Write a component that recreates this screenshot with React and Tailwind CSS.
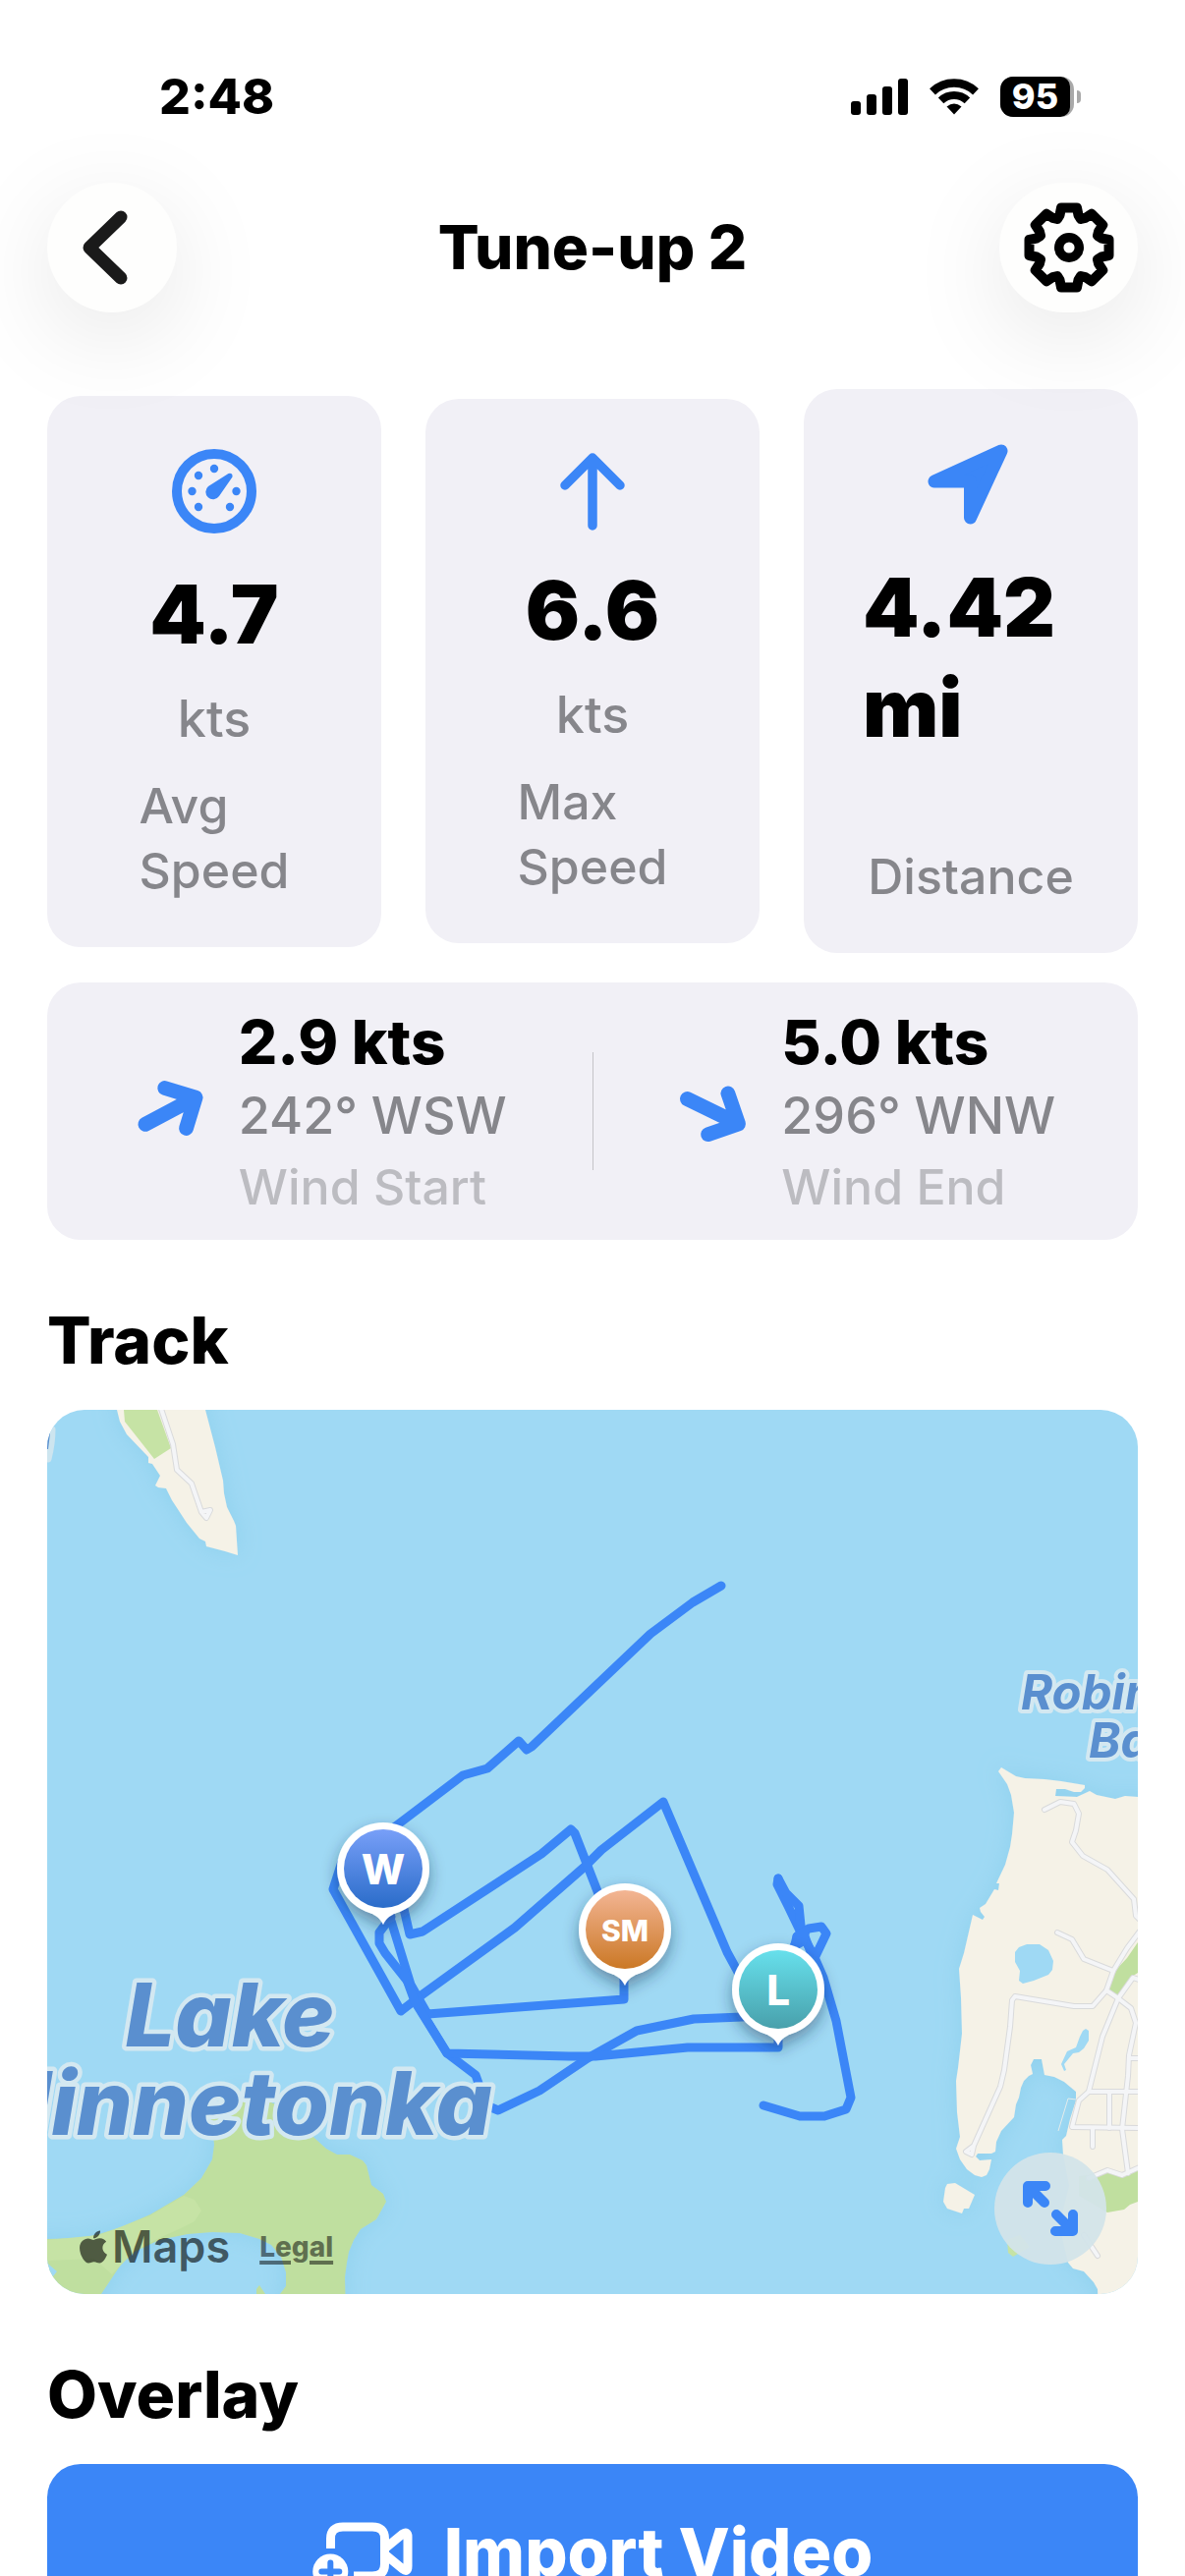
import React from 'react';
import { FaApple } from 'react-icons/fa';

const BLUE = '#3b86f7';

// teeth of the settings gear, one entry per 45 degrees
const gearPoints = Array.from({ length: 8 })
  .flatMap((_, i) => {
    const a = (i * Math.PI) / 4;
    return [[-12, -29], [-9.5, -33], [-8, -40.5], [8, -40.5], [9.5, -33]].map(
      ([x, y]) => [x * Math.cos(a) - y * Math.sin(a), x * Math.sin(a) + y * Math.cos(a)]
    );
  })
  .map(([x, y]) => `${x.toFixed(1)},${y.toFixed(1)}`)
  .join(' ');

const GearIcon = () => (
  <svg width="92" height="92" viewBox="-46 -46 92 92" fill="none" stroke="#000" strokeWidth="10" strokeLinejoin="round">
    <polygon points={gearPoints} />
    <circle r="10.3" strokeWidth="9.4" />
  </svg>
);

const GaugeIcon = () => (
  <svg width="86" height="86" viewBox="-43 -43 86 86" fill={BLUE}>
    <circle r="38" fill="none" stroke={BLUE} strokeWidth="10" />
    {[[0, -23], [-16, -16], [-22.5, 0], [-16, 16], [16, 16], [22.5, 0]].map(([x, y]) => (
      <circle key={`${x},${y}`} cx={x} cy={y} r="4.2" />
    ))}
    <path d="M14.5 -18 Q19 -19 18.5 -14.5 L5 5 A7.5 7.5 0 1 1 -6 -5 Z" />
  </svg>
);

const ArrowUpIcon = () => (
  <svg width="66" height="80" viewBox="-33 -40 66 80" fill="none" stroke={BLUE} strokeWidth="9.5" strokeLinecap="round" strokeLinejoin="round">
    <path d="M0 35V-33M-28 -6L0 -34L28 -6" />
  </svg>
);

const NavigationIcon = () => (
  <svg className="overflow-visible" width="82" height="82" viewBox="3 1 82 82" fill={BLUE} stroke={BLUE} strokeWidth="13" strokeLinejoin="round">
    <path d="M75 7L7 38L43.5 38L43.5 75Z" />
  </svg>
);

const WindArrow = ({ angle }) => (
  <svg width="76" height="76" viewBox="-36 -36 72 72" fill="none" stroke={BLUE} strokeWidth="14" strokeLinecap="round" strokeLinejoin="round">
    <path d="M0 27V-27M-22 -6L0 -28L22 -6" transform={`rotate(${angle})`} />
  </svg>
);

const stats = [
  { label: 'Avg Speed', value: '4.7', unit: 'kts', icon: <GaugeIcon />, iconBox: 'h-[105px]' },
  { label: 'Max Speed', value: '6.6', unit: 'kts', icon: <ArrowUpIcon />, iconBox: 'h-[98px]' },
  { label: 'Distance', value: '4.42 mi', unit: '', icon: <NavigationIcon />, iconBox: 'h-[105px]' },
];

const winds = [
  { label: 'Wind Start', speed: '2.9 kts', from: '242° WSW', angle: 62 },
  { label: 'Wind End', speed: '5.0 kts', from: '296° WNW', angle: 116 },
];

const roads = [
  '115,-4 128,35 132,61 147,75 157,104 166,102 162,110 157,104',
  '1015,407 1031,399 1045,401 1050,411 1047,428 1043,440 1054,454 1079,468 1106,498 1108,515 1114,521',
  '1028,532 1043,539 1055,559 1085,571',
  '1114,528 1099,548 1085,571 1078,591 1064,607 1045,607 985,597 982,601 980,628 974,672 970,689 943,749 935,755 941,758 943,749',
  '1078,591 1090,599 1103,609 1108,624 1101,657 1100,678 1094,732 1100,777',
  '1114,581 1105,578 1090,599 1074,638 1060,694 1050,703 1043,730 1114,731',
  '1060,694 1114,694',
  '1081,694 1081,731',
  '1064,731 1064,750',
  '1101,660 1114,660',
  '1060,782 1079,774 1094,779 1114,770',
  '1055,840 1069,861',
];

const track = [
  '686,179 657,196 614,228 555,284 493,343 488,346 480,337 448,365 423,372 353,425 300,460 291,488 360,612 378,598 476,527 547,465 564,448 627,399 692,552 710,585',
  '744,615 707,618 658,620 600,632 550,660 501,693 459,713 447,708 436,677 407,655 382,614 367,582 344,553 338,543 338,532 350,516',
  '360,495 369,534 382,531 503,452 533,427 537,431 560,490 587,572 587,600 387,615 370,585 350,520',
  '363,572 374,602 407,655 531,658 558,658 652,649 744,649 744,630',
  '744,477 743,483 754,505 766,530 780,555 790,578 803,622 818,700 813,712 791,719 766,719 729,708',
  '744,477 752,492 765,505 767,525 780,560',
  '758,556 763,536 775,528 788,526 793,533 782,556',
  '763,536 772,530 769,541 760,546',
];

const pins = [
  { name: 'W', x: 342, y: 467, from: '#789ff8', to: '#2a6cc9', size: 42 },
  { name: 'SM', x: 588, y: 529, from: '#f3b594', to: '#cb7825', size: 30 },
  { name: 'L', x: 744, y: 590, from: '#67e0ec', to: '#48a0ab', size: 42 },
];

const Pin = ({ name, x, y, from, to, size }) => (
  <g transform={`translate(${x} ${y})`}>
    <linearGradient id={`pin-${name}`} x1="0" y1="0" x2="0" y2="1">
      <stop offset="0" stopColor={from} />
      <stop offset="1" stopColor={to} />
    </linearGradient>
    <g fill="#fff" filter="url(#pinShadow)">
      <circle r="47" />
      <path d="M-32 34C-18 46 -6 44 0 57C6 44 18 46 32 34Z" />
    </g>
    <circle r="40" fill={`url(#pin-${name})`} />
    <text y={size === 30 ? 12 : 16} textAnchor="middle" fill="#fff" fontSize={size} fontWeight="800">{name}</text>
  </g>
);

const TrackMap = () => (
  <svg className="block h-[900px] w-full bg-[#9fd9f4]" viewBox="0 0 1110 900" preserveAspectRatio="xMidYMid slice">
    <defs>
      <filter id="pinShadow" x="-50%" y="-50%" width="200%" height="200%">
        <feDropShadow dx="0" dy="7" stdDeviation="8" floodColor="#1a2a4a" floodOpacity="0.45" />
      </filter>
      <filter id="shore" x="-20%" y="-20%" width="140%" height="140%">
        <feDropShadow dx="0" dy="0" stdDeviation="12" floodColor="#7cc6e4" floodOpacity="0.45" />
      </filter>
    </defs>

    {/* Land */}
    <g fill="#f5f2e7" filter="url(#shore)">
      <polygon points="71,-20 71,0 74,12 81,25 103,48 103,54 107,55 115,67 110,77 113,79 121,80 127,92 142,115 155,131 161,134 162,139 181,144 194,148 192,118 190,113 183,99 180,85 179,72 171,38 161,0 158,-20" />
      <polygon points="971,364 968,368 977,381 981,392 984,410 982,432 980,445 975,463 966,482 969,482 968,489 964,488 955,503 949,507 950,511 954,516 952,519 942,514 933,553 928,569 930,598 931,635 927,670 925,683 926,715 929,740 925,752 929,763 936,773 944,779 951,781 956,779 959,773 961,763 949,764 945,760 947,757 961,757 965,755 966,745 971,734 984,720 986,707 989,700 991,690 994,683 999,678 1003,676 1001,667 1004,661 1012,661 1015,677 1025,679 1035,684 1047,694 1047,703 1041,722 1037,739 1033,743 1034,758 1040,790 1030,830 1039,868 1044,874 1055,877 1065,888 1069,895 1070,920 1130,920 1130,394 1110,394 1097,393 1087,396 1068,392 1061,388 1048,394 1026,393 1027,386 1036,386 1045,389 1052,389 1056,385 1056,382 1032,378 1015,376 995,375 986,373" />
      <polygon points="916,788 924,787 944,799 938,813 933,813 931,818 916,813 912,806 914,792" />
      <polygon fill="#bfdf9f" points="-20,844 0,844 35,843 53,839 75,832 105,819 139,799 157,782 168,763 170,748 169,739 165,725 168,712 177,700 193,696 211,698 235,708 253,723 273,742 284,752 295,758 308,758 321,764 325,769 330,789 342,798 345,806 335,824 319,834 312,845 307,857 305,868 303,883 304,920 230,920 237,900 243,892 243,878 238,862 228,850 216,844 196,838 168,837 143,839 114,845 89,857 75,870 55,900 55,920 -20,920" />
    </g>
    <polygon fill="#c6e3a5" points="0,845 53,840 105,820 139,800 150,804 157,815 150,826 136,833 112,844 89,856 66,880 48,864 0,866" />
    <polygon fill="#c6e3a5" points="78,0 79,12 109,50 126,39 112,0" />
    <polygon fill="#c0df9f" points="1110,542 1099,558 1085,573 1080,589 1090,597 1102,578 1110,573" />
    <polygon fill="#c0df9f" points="1050,780 1068,778 1079,774 1094,779 1110,773 1110,806 1102,809 1096,814 1079,817 1050,800" />
    <polygon fill="#c6e3a5" points="977,845 978,858 983,862 1000,852 990,840" />
    <polygon fill="#bfdf9f" points="213,900 213,895 216,891 222,900" />

    {/* Ponds */}
    <g fill="#9fd9f4">
      <polygon points="985,552 989,547 997,544 1010,544 1019,550 1024,561 1023,570 1019,575 1004,581 993,584 989,581 990,571 985,562" />
      <polygon points="1054,632 1057,630 1060,632 1060,642 1055,650 1050,654 1044,655 1035,666 1037,672 1035,673 1032,666 1038,653 1047,649 1051,638" />
      <polygon points="3,871 10,877 6,882 0,880 0,868" />
    </g>
    <path d="M1047 702L1039 701L1029 734" fill="none" stroke="#e4ecec" strokeWidth="1" />

    <g fill="none" strokeLinejoin="round" strokeLinecap="round">
      {roads.map((points) => (
        <polyline key={points} points={points} stroke="#d9dadb" strokeWidth="6" />
      ))}
      {roads.map((points) => (
        <polyline key={points} points={points} stroke="#f4f5f7" strokeWidth="4" />
      ))}
    </g>

    <path d="M5 20Q5 34 1 50" fill="none" stroke="#cde5ef" strokeWidth="7" strokeLinecap="round" />
    <path d="M2 24L0 40" stroke="#5a8fcf" strokeWidth="2" />

    {/* Sailed track */}
    <g fill="none" stroke={BLUE} strokeWidth="9" strokeLinejoin="round" strokeLinecap="round">
      {track.map((points) => (
        <polyline key={points} points={points} />
      ))}
    </g>

    <g
      fill="#5a8fcf"
      stroke="#d3e8f1"
      strokeLinejoin="round"
      fontStyle="italic"
      style={{ paintOrder: 'stroke' }}
    >
      <g fontSize="90" fontWeight="800" strokeWidth="9" textAnchor="middle">
        <text x="186" y="648">Lake</text>
        <text x="186" y="738">Minnetonka</text>
      </g>
      <g fontSize="49" fontWeight="700" strokeWidth="8">
        <text x="991" y="305">Robinsons</text>
        <text x="1060" y="354">Bay</text>
      </g>
    </g>

    {pins.map((pin) => (
      <Pin key={pin.name} {...pin} />
    ))}
  </svg>
);

const StatusBar = () => (
  <div className="flex h-[52px] items-center justify-between pr-[106px] pl-[162px]">
    <span className="text-[50px] leading-[52px] font-extrabold">2:48</span>
    <div className="flex items-center gap-[22px]">
      <svg width="58" height="37" viewBox="0 0 58 37">
        <rect x="0" y="23" width="10" height="14" rx="3" />
        <rect x="16" y="16" width="10" height="21" rx="3" />
        <rect x="32" y="8" width="10" height="29" rx="3" />
        <rect x="48" y="0" width="10" height="37" rx="3" />
      </svg>
      <svg width="50" height="37" viewBox="-25 -36.5 50 37" fill="none" stroke="#000">
        <path d="M-22 -23.2A32 32 0 0 1 22 -23.2" strokeWidth="8.5" />
        <path d="M-13.4 -14.2A19.5 19.5 0 0 1 13.4 -14.2" strokeWidth="8" />
        <path d="M0 0L-7.5 -8Q0 -14 7.5 -8Z" fill="#000" stroke="none" />
      </svg>
      <div className="flex items-center gap-[3px]">
        <div className="h-[41px] w-[75px] overflow-hidden rounded-[13px] bg-[#a9a9a9]">
          <div className="flex h-full w-[71px] items-center justify-center rounded-r-[10px] bg-black text-[36px] leading-[41px] font-extrabold text-white">
            95
          </div>
        </div>
        <div className="h-[13px] w-[4px] rounded-r-full bg-[#a9a9a9]" />
      </div>
    </div>
  </div>
);

const App = () => {
  return (
    <div className="h-screen overflow-hidden bg-white font-['Inter',sans-serif] text-black">
      <header className="relative z-10 pt-[72px]">
        <StatusBar />
        <div className="mt-[62px] grid grid-cols-[1fr_auto_1fr] items-center px-12">
          <button
            aria-label="Back"
            className="flex size-[132px] items-center justify-center rounded-full bg-[#fefefd] shadow-[0_24px_100px_rgba(0,0,0,0.1)]"
          >
            <svg width="60" height="80" viewBox="0 0 60 80" fill="none" stroke="#1a1a1a" strokeWidth="13" strokeLinecap="round" strokeLinejoin="round">
              <path d="M39 9L7 40L39 71" />
            </svg>
          </button>
          <h1 className="text-[62px] leading-[72px] font-extrabold">Tune-up 2</h1>
          <button
            aria-label="Settings"
            className="flex h-[132px] w-[141px] items-center justify-center justify-self-end rounded-full bg-[#fefefd] shadow-[0_24px_100px_rgba(0,0,0,0.1)]"
          >
            <GearIcon />
          </button>
        </div>
      </header>

      <main className="px-12 pt-[78px]">
        {/* Stats */}
        <section className="grid grid-cols-3 items-center gap-[45px]">
          {stats.map((stat) => (
            <div key={stat.label} className="flex flex-col items-center gap-[22px] rounded-[34px] bg-[#f1f0f6] px-[60px] py-[45px]">
              <div className={`flex items-center justify-center ${stat.iconBox}`}>{stat.icon}</div>
              <p className="text-[82px] leading-[102px] font-black">{stat.value}</p>
              {stat.unit ? (
                <p className="text-[52px] leading-[66px] font-medium text-[#86868b]">{stat.unit}</p>
              ) : (
                <div className="h-[43px]" />
              )}
              <p className="w-min text-[50px] leading-[66px] font-medium text-[#86868b]">{stat.label}</p>
            </div>
          ))}
        </section>

        {/* Wind */}
        <section className="mt-[30px] flex items-center rounded-[34px] bg-[#f1f0f6] py-[21px]">
          {winds.map((wind, i) => (
            <React.Fragment key={wind.label}>
              {i > 0 && <div className="h-[120px] w-px bg-[#c4c4c8]" />}
              <div className="flex flex-1 items-center justify-center gap-[32px]">
                <WindArrow angle={wind.angle} />
                <div className="flex flex-col gap-[6px] pt-1">
                  <p className="text-[62px] leading-[72px] font-extrabold">{wind.speed}</p>
                  <p className="text-[52px] leading-[66px] font-medium text-[#86868b]">{wind.from}</p>
                  <p className="text-[50px] leading-[66px] font-medium text-[#bcbcc1]">{wind.label}</p>
                </div>
              </div>
            </React.Fragment>
          ))}
        </section>

        {/* Track */}
        <h2 className="mt-[62px] text-[66px] leading-[80px] font-extrabold">Track</h2>
        <div className="relative mt-[31px] overflow-hidden rounded-[38px]">
          <TrackMap />
          <div className="absolute bottom-[18px] left-[31px] flex items-center gap-[30px]">
            <span className="flex items-center gap-[3px] text-[45px] leading-[60px] font-semibold text-black/60">
              <FaApple className="h-[38px] w-[32px]" />
              Maps
            </span>
            <a href="#legal" className="text-[28px] leading-[40px] font-extrabold text-black/50 underline decoration-4 underline-offset-4">
              Legal
            </a>
          </div>
          <button
            aria-label="Expand map"
            className="absolute right-[32px] bottom-[30px] flex size-[114px] items-center justify-center rounded-full bg-[#d3e4e9]/95"
          >
            <svg width="56" height="56" viewBox="0 0 56 56" fill="none" stroke={BLUE} strokeWidth="10" strokeLinecap="round" strokeLinejoin="round">
              <path d="M5 22V5H23M7 7L22 22" />
              <path d="M51 34V51H33M49 49L34 34" />
            </svg>
          </button>
        </div>

        {/* Overlay */}
        <h2 className="mt-[62px] text-[66px] leading-[80px] font-extrabold">Overlay</h2>
        <button className="mt-[31px] flex w-full items-center justify-center gap-[32px] rounded-[34px] bg-[#3b86f7] py-[49px] text-[68px] leading-[80px] font-extrabold text-white">
          <svg width="102" height="76" viewBox="18 67 102 76" fill="none" stroke="#fff" strokeWidth="9" strokeLinecap="butt" strokeLinejoin="round">
            <path d="M36.5 102V92Q36.5 80 49 80H79Q91.5 80 91.5 92V118Q91.5 130 79 130H60" />
            <path d="M93 101L110 87Q115 84 115 90V120Q115 127 110 123L93 109" />
            <circle cx="36.3" cy="125.5" r="18" fill="#fff" stroke="none" />
            <path d="M36.3 116.5V134.5M27.3 125.5H45.3" stroke={BLUE} strokeWidth="6" strokeLinecap="round" />
          </svg>
          Import Video
        </button>
      </main>
    </div>
  );
};

export default App;
